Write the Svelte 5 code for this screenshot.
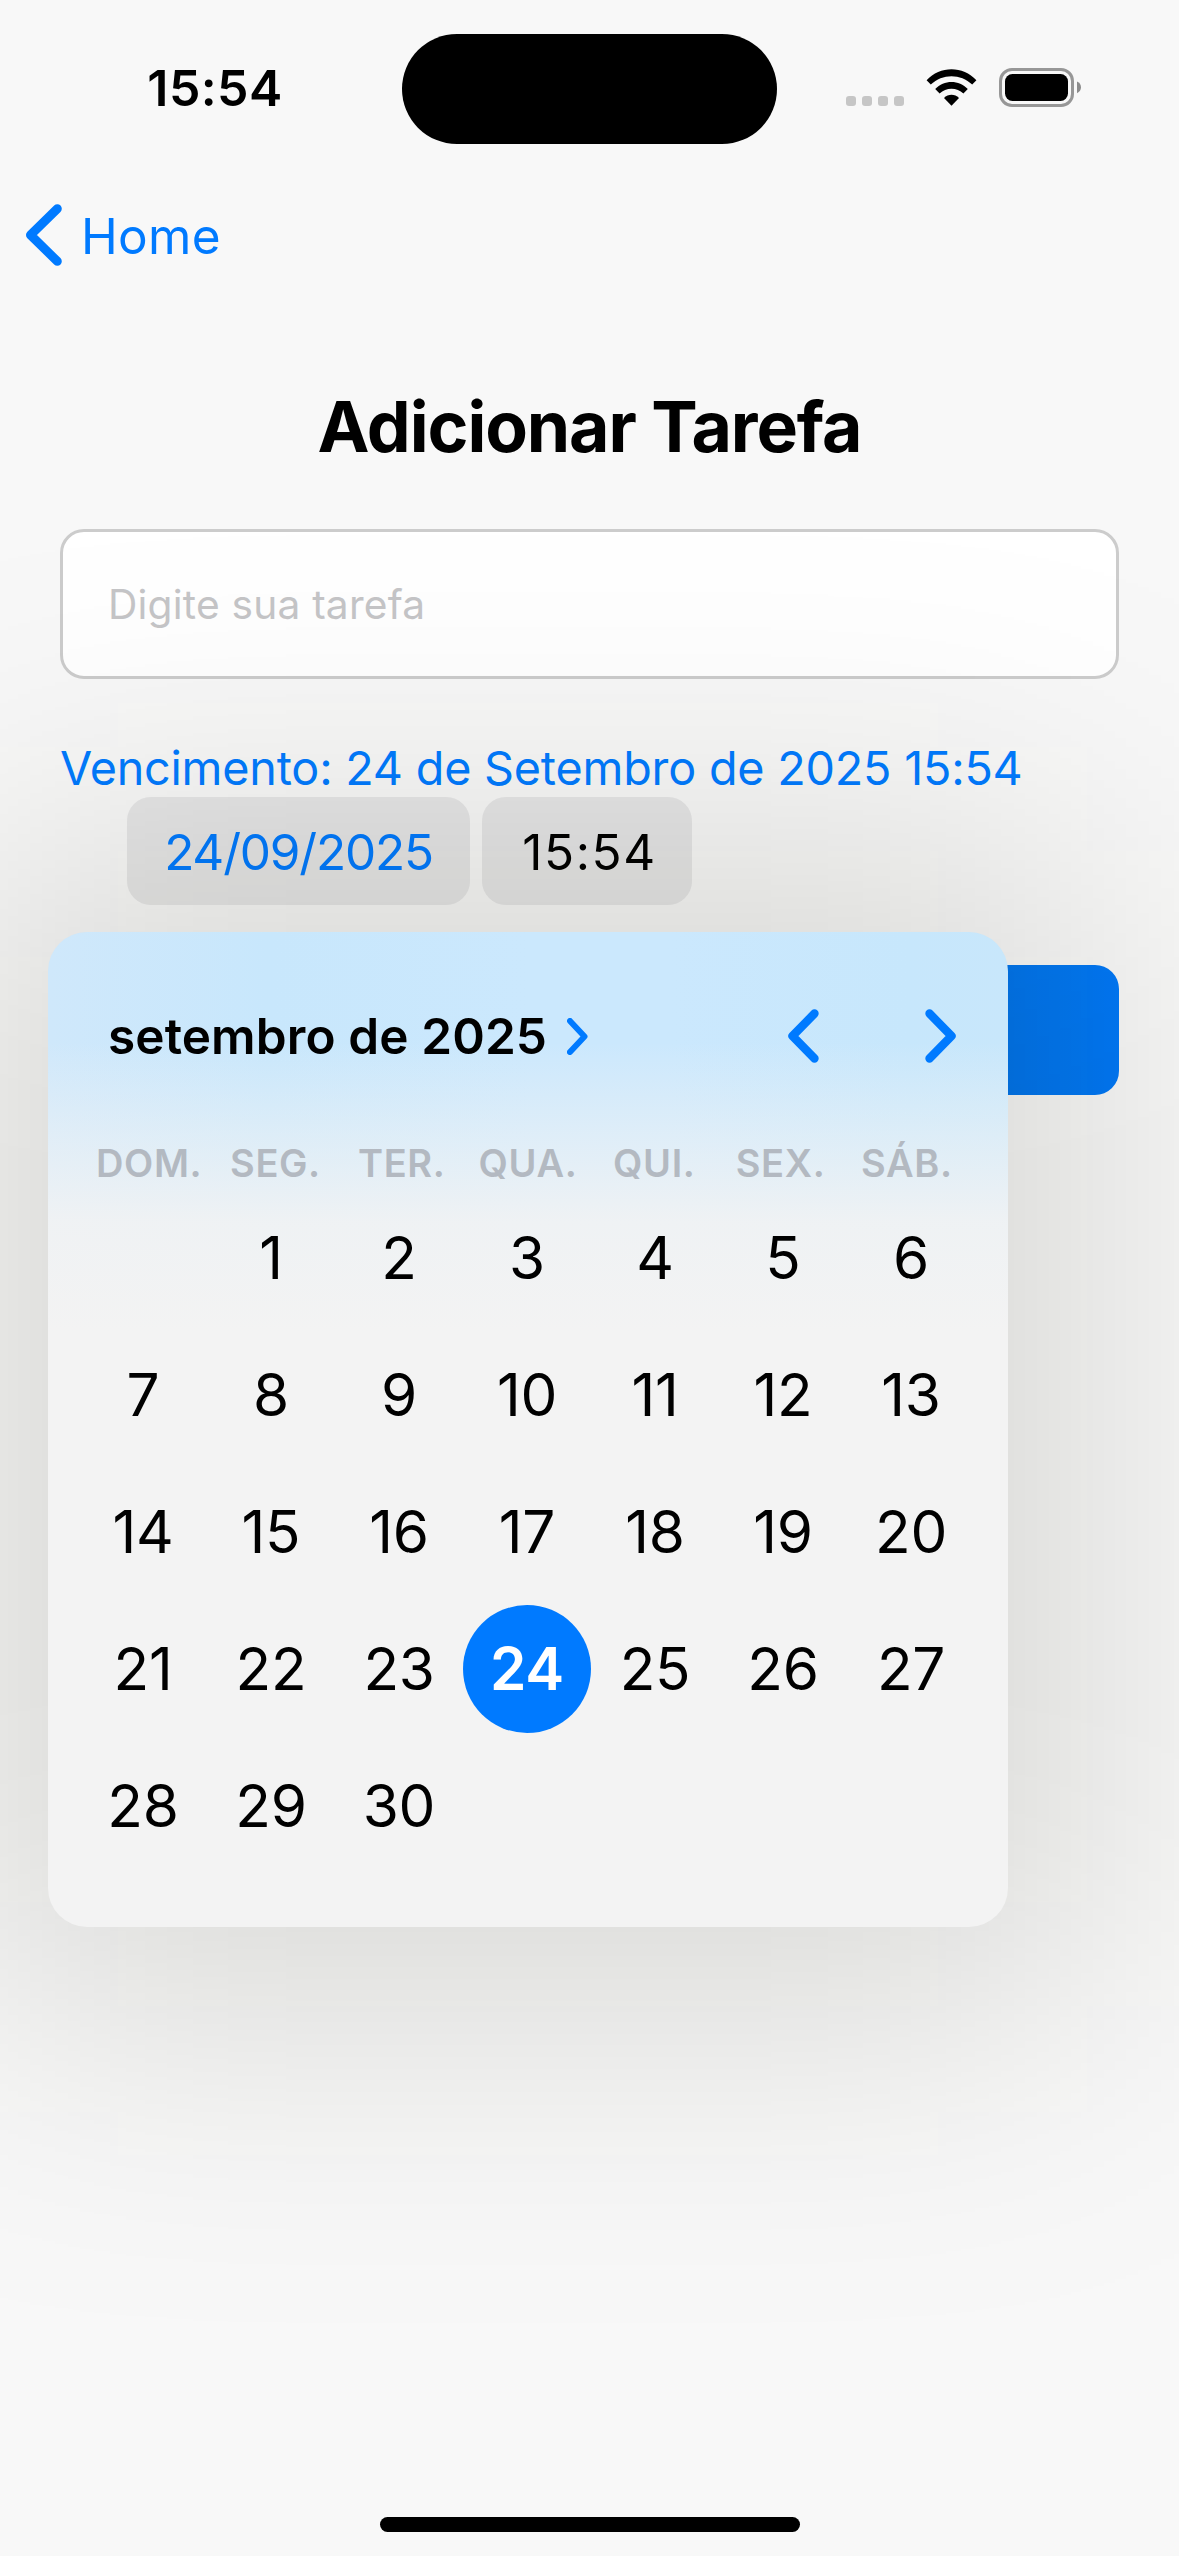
<script>
  const weekdays = ['DOM.', 'SEG.', 'TER.', 'QUA.', 'QUI.', 'SEX.', 'SÁB.'];
  const days = Array.from({ length: 30 }, (_, i) => i + 1);
  const selected = 24;
</script>

<div class="screen">
  <header class="status">
    <div class="clock">15:54</div>
    <div class="island"></div>
    <div class="indicators">
      <div class="signal"><i></i><i></i><i></i><i></i></div>
      <svg class="wifi" width="51" height="37" viewBox="0 0 51 37">
        <path d="M0.6 11.2C14-3.4 37-3.4 50.4 11.2L46.2 15.6C34.6 4.4 16.4 4.4 4.8 15.6Z" />
        <path d="M9.2 20.1C18 10.6 33 10.6 41.8 20.1L37.4 24.5C31 18.2 20 18.2 13.6 24.5Z" />
        <path d="M18 29C22.2 24.6 28.8 24.6 33 29L25.5 36.8Z" />
      </svg>
      <svg class="battery" width="82" height="39" viewBox="0 0 82 39">
        <rect class="shell" x="1.5" y="1.5" width="72" height="36" rx="11.5" />
        <rect x="6" y="6" width="63" height="27" rx="7.5" />
        <path class="nub" d="M78 13.5C83.3 15.5 83.3 23 78 25.2Z" />
      </svg>
    </div>
  </header>

  <nav class="back">
    <svg width="37" height="62" viewBox="0 0 37 62"><path d="M32.3 4.7L5.5 31L32.3 57.3" /></svg>
    <span>Home</span>
  </nav>

  <main>
    <h1>Adicionar Tarefa</h1>
    <div class="field">Digite sua tarefa</div>
    <p class="due">Vencimento: 24 de Setembro de 2025 15:54</p>
    <div class="chips">
      <div class="chip date">24/09/2025</div>
      <div class="chip hour">15:54</div>
    </div>
    <div class="submit"></div>
  </main>

  <div class="shade"></div>
  <section class="calendar">
    <div class="head">
      <strong>setembro de 2025</strong>
      <svg class="more" width="21" height="37" viewBox="0 0 21 37"><path d="M3 3L17.5 18.5L3 34" /></svg>
      <div class="arrows">
        <svg width="31" height="54" viewBox="0 0 31 54"><path d="M26.5 4.5L4.5 27L26.5 49.5" /></svg>
        <svg width="31" height="54" viewBox="0 0 31 54"><path d="M4.5 4.5L26.5 27L4.5 49.5" /></svg>
      </div>
    </div>
    <div class="week">
      {#each weekdays as name}<span>{name}</span>{/each}
    </div>
    <div class="days">
      {#each days as day}
        <div class="day" class:first={day === 1} class:selected={day === selected}>{day}</div>
      {/each}
    </div>
  </section>

  <div class="home-bar"></div>
</div>

<style>
  :global(body) { background: #f8f8f8; }
  .screen {
    position: relative;
    display: flex;
    flex-direction: column;
    width: 1179px;
    height: 2556px;
    overflow: hidden;
    background: #f8f8f8;
    color: #000;
    font-family: Inter, "Liberation Sans", sans-serif;
  }
  .status { display: grid; grid-template-columns: 402px 375px 402px; height: 177px; }
  .clock {
    padding: 58px 0 0 28px;
    text-align: center;
    font-size: 50px;
    line-height: 60px;
    font-weight: 600;
    letter-spacing: 0.4px;
  }
  .island { height: 110px; margin-top: 34px; border-radius: 55px; background: #000; }
  .indicators { display: flex; align-items: flex-start; padding-left: 69px; }
  .signal { display: flex; gap: 6px; margin-top: 96px; }
  .signal i { width: 10px; height: 10px; border-radius: 3px; background: #c6c6c6; }
  .wifi { margin: 69px 0 0 22px; }
  .battery { margin: 68px 0 0 22px; }
  .shell { fill: none; stroke: #979797; stroke-width: 3; }
  .nub { fill: #8c8c8c; }

  .back {
    display: flex;
    align-items: center;
    gap: 19px;
    height: 118px;
    padding-left: 25px;
    color: #007aff;
    font-size: 49.5px;
    line-height: 60px;
    letter-spacing: 0.3px;
  }
  .back svg { margin-bottom: 2px; }
  .back path, .calendar path {
    fill: none;
    stroke: #007aff;
    stroke-width: 9;
    stroke-linecap: round;
    stroke-linejoin: round;
  }

  main { padding: 90px 60px 0; }
  h1 {
    margin: 0 0 60px;
    text-align: center;
    font-size: 69.7px;
    line-height: 84px;
    font-weight: 700;
    letter-spacing: -1.1px;
  }
  .field {
    display: flex;
    align-items: center;
    box-sizing: border-box;
    height: 150px;
    padding-left: 45px;
    border: 3px solid #ccc;
    border-radius: 24px;
    background: #fff;
    color: #c5c5c7;
    font-size: 40.7px;
    letter-spacing: 0.2px;
  }
  .due {
    margin: 60px 0 0;
    color: #007aff;
    font-size: 46.7px;
    line-height: 58px;
    letter-spacing: -0.2px;
    white-space: nowrap;
  }
  .chips { display: flex; gap: 12px; padding-left: 67px; }
  .chip {
    display: flex;
    align-items: center;
    justify-content: center;
    box-sizing: border-box;
    height: 108px;
    padding-top: 1px;
    border-radius: 24px;
    background: rgba(118, 118, 128, 0.14);
    font-size: 49.5px;
  }
  .date { width: 343px; color: #007aff; letter-spacing: -1.2px; }
  .hour { width: 210px; padding-left: 5px; letter-spacing: 1.6px; }
  .submit {
    height: 130px;
    margin-top: 60px;
    border-radius: 24px;
    background: linear-gradient(to right, #0074ec 88%, #0078f8);
  }

  /* Wide soft shadow under the calendar, spreading over the form */
  .shade {
    position: absolute;
    top: 851px;
    left: -32px;
    width: 1120px;
    height: 1156px;
    background: rgba(20, 20, 0, 0.14);
    filter: blur(158px);
  }
  .calendar {
    position: absolute;
    top: 932px;
    left: 48px;
    box-sizing: border-box;
    width: 960px;
    height: 995px;
    padding-top: 74px;
    border-radius: 39px;
    background:
      linear-gradient(to bottom, rgba(243, 243, 243, 0) 110px, rgba(243, 243, 243, 0.5) 205px, rgba(243, 243, 243, 0.9) 290px, #f3f3f3 400px),
      linear-gradient(to right, #cfe8fb, #c8e7fc 220px, #cbe8fd 480px, #cbe8fd 620px, #c7e7fc 860px, #c8e7fb);
  }
  .head { display: flex; align-items: center; height: 60px; padding: 0 52px 0 60px; }
  .head strong { font-size: 49.5px; font-weight: 600; letter-spacing: 0.1px; }
  .calendar path { stroke-width: 8.4; }
  .calendar .more { margin-left: 20px; }
  .calendar .more path { stroke-width: 6; }
  .arrows { display: flex; gap: 106px; margin-left: auto; }
  .week {
    display: grid;
    grid-template-columns: repeat(7, 1fr);
    height: 40px;
    margin: 77px 38px 0;
    color: #b3b9c1;
    font-size: 38px;
    font-weight: 600;
    line-height: 40px;
    letter-spacing: 0.6px;
    text-align: center;
  }
  .days {
    display: grid;
    grid-template-columns: repeat(7, 128px);
    grid-auto-rows: 137px;
    align-items: center;
    margin: 6px 0 0 31px;
    font-size: 58.5px;
    letter-spacing: -0.3px;
  }
  .day { height: 128px; line-height: 128px; text-align: center; }
  .first { grid-column: 2; }
  .selected { border-radius: 50%; background: #007aff; color: #fff; font-weight: 600; }
  .home-bar { width: 420px; height: 15px; margin: auto auto 24px; border-radius: 8px; background: #000; }
</style>
